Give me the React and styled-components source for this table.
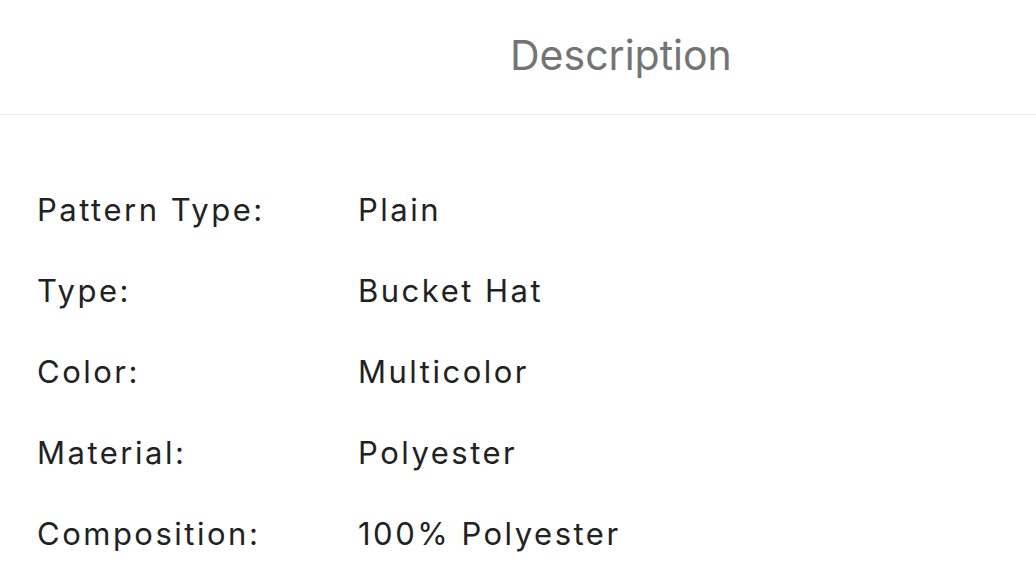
import React from 'react'
import styled, { createGlobalStyle } from 'styled-components'

const GlobalStyle = createGlobalStyle`
  html, body {
    margin: 0;
    padding: 0;
    background: #fff;
    font-family: Inter, "Noto Sans", sans-serif;
  }
`

const details = [
  { label: 'Pattern Type:', value: 'Plain' },
  { label: 'Type:', value: 'Bucket Hat' },
  { label: 'Color:', value: 'Multicolor' },
  { label: 'Material:', value: 'Polyester' },
  { label: 'Composition:', value: '100% Polyester' }
]

function App() {
  return (
    <>
      <GlobalStyle />
      <Page>
        <TabBar>
          <Tab>Description</Tab>
        </TabBar>
        <DetailList>
          {details.map(item => (
            <DetailRow key={item.label}>
              <Label>{item.label}</Label>
              <Value>{item.value}</Value>
            </DetailRow>
          ))}
        </DetailList>
      </Page>
    </>
  )
}

export default App

const Page = styled.div`
  width: 1036px;
  height: 581px;
  overflow: hidden;
  background: #fff;
`

const TabBar = styled.div`
  height: 115px;
  display: flex;
  align-items: center;
  padding-left: 510px;
  border-bottom: 1px solid #e8e8e8;
  box-sizing: border-box;
`

const Tab = styled.div`
  font-size: 41px;
  color: #747474;
  margin-top: -4px;
`

const DetailList = styled.div`
  display: flex;
  flex-direction: column;
  padding: 64px 0 0 37px;
`

const DetailRow = styled.div`
  display: grid;
  grid-template-columns: 321px auto;
  height: 81px;
  align-items: start;
  font-size: 31px;
  color: #222;
  line-height: 62px;
  letter-spacing: 2.5px;
`

const Label = styled.div``

const Value = styled.div``
